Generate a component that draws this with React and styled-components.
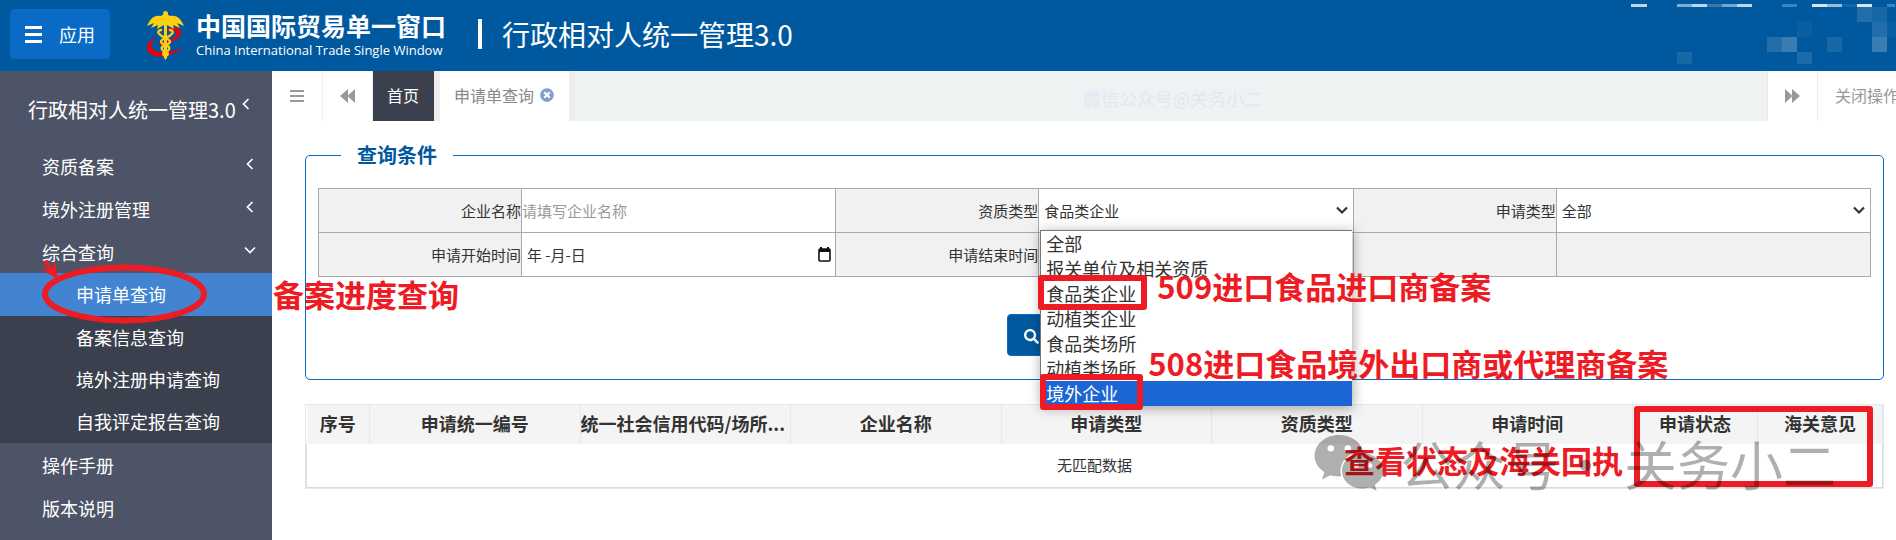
import styled, { createGlobalStyle } from "styled-components"
import { FaSearch, FaTimesCircle, FaWeixin } from "react-icons/fa"

const GlobalStyle = createGlobalStyle`
    * {
        box-sizing: border-box;
    }
    body {
        margin: 0;
        background: #fff;
        color: #333;
        font-family: "Noto Sans CJK SC", sans-serif;
        font-size: 15px;
        overflow-x: hidden;
    }
    button, input, select {
        font-family: inherit;
    }
    ul {
        margin: 0;
        padding: 0;
        list-style: none;
    }
    a {
        color: inherit;
        text-decoration: none;
    }
`

const Page = styled.div`
    min-height: 100vh;
    display: flex;
    flex-direction: column;
`

const Header = styled.header`
    position: relative;
    display: flex;
    align-items: center;
    height: 71px;
    padding: 0 10px;
    background: #00599f;
    color: #fff;
`

const AppButton = styled.button`
    display: flex;
    align-items: center;
    gap: 17px;
    height: 50px;
    margin-bottom: 3px;
    padding: 0 15px;
    border: 0;
    border-radius: 4px;
    background: #0a6bc6;
    color: #fff;
    font-size: 18px;
`

const Brand = styled.a`
    display: flex;
    align-items: center;
    gap: 12px;
    margin-left: 37px;
    white-space: nowrap;

    .brand__name {
        font-size: 25px;
        line-height: 28px;
        font-weight: 700;
    }

    .brand__english {
        font-family: "Open Sans", sans-serif;
        font-size: 13px;
        line-height: 22px;
    }
`

const SystemTitle = styled.h1`
    display: flex;
    align-items: center;
    gap: 20px;
    margin: 0 0 4px 32px;
    font-size: 28px;
    line-height: 40px;
    font-weight: 400;
    white-space: nowrap;

    &::before {
        content: "";
        width: 4px;
        height: 30px;
        background: #fff;
    }
`

const HeaderPixels = styled.svg`
    position: absolute;
    top: 0;
    right: 0;
`

const Body = styled.div`
    display: flex;
    flex: 1;
`

const Sidebar = styled.nav`
    flex: 0 0 272px;
    background: #4e5467;
    color: #fff;
`

const SidebarTitle = styled.a`
    display: flex;
    align-items: center;
    gap: 4px;
    height: 73px;
    padding: 3px 0 0 28px;
    font-size: 20px;
    white-space: nowrap;

    svg {
        margin-bottom: 10px;
    }
`

const NavLink = styled.a`
    display: flex;
    align-items: center;
    justify-content: space-between;
    height: 43px;
    padding: 0 16px 0 42px;
    font-size: 18px;

    svg {
        margin-bottom: 4px;
    }
`

const SubMenu = styled.ul`
    padding-bottom: 1px;
    background: #3a404d;
`

const SubItem = styled.li`
    position: relative;
    height: ${({ $active }) => ($active ? 43 : 42)}px;
    background: ${({ $active }) => ($active ? "#4284d0" : "none")};

    a {
        display: block;
        padding-left: 76px;
        font-size: 18px;
        line-height: 42px;
    }
`

const Main = styled.main`
    flex: 1;
    min-width: 0;
`

const TabBar = styled.div`
    display: flex;
    height: 50px;
    background: #eef2f3;
    color: #999;
`

const BarButton = styled.button`
    display: flex;
    align-items: center;
    justify-content: center;
    flex: 0 0 ${({ $width }) => $width || 50}px;
    padding: 0;
    border: 0;
    border-right: 1px solid #eee;
    background: #fff;
    color: #999;
    font-size: 16px;
    white-space: nowrap;
    overflow: hidden;
`

const CloseMenu = styled(BarButton)`
    justify-content: flex-start;
    padding: 0 0 2px 17px;
    border-right: 0;
`

const Tab = styled.a`
    display: flex;
    align-items: center;
    gap: 6px;
    padding: 0 15px 2px 14px;
    border-right: 6px solid #eee;
    background: ${({ $dark }) => ($dark ? "#3a404d" : "#fff")};
    color: ${({ $dark }) => ($dark ? "#fff" : "#888")};
    font-size: 16px;
    white-space: nowrap;

    svg {
        color: #7f9fd0;
        font-size: 14px;
    }
`

const TabSpace = styled.div`
    flex: 1;
    padding-left: 508px;
    border-right: 1px solid #e8e8e8;
    color: #e2e6f4;
    font-size: 18px;
    line-height: 54px;
    white-space: nowrap;
    overflow: hidden;
`

const Content = styled.div`
    padding: 20px 12px 52px 33px;
`

const QueryBox = styled.fieldset`
    min-width: 0;
    margin: 0;
    padding: 19px 12px 23px;
    border: 1px solid #0a6bc0;
    border-radius: 5px;

    legend {
        margin-left: 23px;
        padding: 0 16px;
        color: #00599f;
        font-size: 20px;
        line-height: 28px;
        font-weight: 700;
    }
`

const QueryTable = styled.table`
    width: 100%;
    border-collapse: collapse;
    table-layout: fixed;

    th,
    td {
        height: 44px;
        padding: 0;
        border: 1px solid #aaa;
    }

    th {
        width: 203px;
        background: #f1f1f1;
        font-weight: 400;
        text-align: right;
    }
`

const BlankCell = styled.td`
    background: #f1f1f1;
`

const Field = styled.div`
    position: relative;
    display: flex;
    align-items: center;
    height: 43px;
    padding-right: ${({ $icon }) => ($icon ? 4 : 0)}px;

    input,
    select {
        flex: 1;
        min-width: 0;
        height: 43px;
        border: 0;
        background: #fff;
        color: #333;
        font-size: 15px;
        outline: 0;
    }

    input {
        padding: 0 0 0 ${({ $icon }) => ($icon ? 5 : 0)}px;
    }

    input::placeholder {
        color: #999;
    }

    select {
        appearance: none;
        padding: 0 5px;
        border-radius: 0;
    }

    select + svg {
        position: absolute;
        top: 15px;
        right: 5px;
        pointer-events: none;
        stroke-width: 2.2;
    }
`

const Menu = styled.ul`
    position: absolute;
    z-index: 2;
    top: 41px;
    left: 1px;
    right: 1px;
    border: solid #767676;
    border-width: 1px 0 0 1px;
    background: #fff;
    box-shadow: 1px 2px 12px rgba(0, 0, 0, 0.35);
`

const MenuItem = styled.li`
    padding-left: 5px;
    background: ${({ $selected }) => ($selected ? "#1b66d4" : "#fff")};
    color: ${({ $selected }) => ($selected ? "#fff" : "#333")};
    font-size: 18px;
    line-height: 25px;
`

const Actions = styled.div`
    display: flex;
    justify-content: center;
    margin-top: 37px;
`

const SearchButton = styled.button`
    width: 176px;
    height: 42px;
    padding: 5px 16px 0;
    border: 1px solid #0a6bc0;
    border-radius: 4px;
    background: #00599f;
    color: #fff;
    font-size: 15px;
    text-align: left;
`

const Results = styled.div`
    position: relative;
    margin-top: 24px;
    border: 1px solid #e3e8ea;
`

const ResultTable = styled.table`
    width: 100%;
    border-collapse: collapse;
    table-layout: fixed;

    th {
        height: 39px;
        padding: 0 0 3px;
        border-right: 1px solid #e3e8ea;
        background: #f4f4f4;
        font-size: 18px;
        line-height: 24px;
        white-space: nowrap;
        overflow: hidden;
    }

    th:first-child {
        width: 63px;
    }

    th:nth-child(3) {
        text-align: left;
    }

    th:nth-child(n + 8) {
        width: 125px;
    }

    td {
        height: 43px;
        padding: 0 0 2px;
        border: 1px solid #e2d8da;
        border-top: 0;
        text-align: center;
    }
`

const Note = styled.span`
    position: absolute;
    z-index: 3;
    color: #ed1c24;
    font-size: 31px;
    line-height: 40px;
    font-weight: 700;
    white-space: nowrap;
`

const ProgressNote = styled(Note)`
    top: 1px;
    left: 273px;
`

const ImporterNote = styled(Note)`
    top: 77px;
    left: 118px;
`

const ExporterNote = styled(Note)`
    top: 154px;
    left: 109px;
`

const StatusNote = styled(Note)`
    top: 35px;
    right: 260px;
`

const Frame = styled.span`
    position: absolute;
    z-index: 3;
    border: 6px solid #ed1c24;
    border-radius: 3px;
`

const ImporterFrame = styled(Frame)`
    top: 86px;
    left: -1px;
    width: 109px;
    height: 35px;
`

const ExporterFrame = styled(Frame)`
    top: 185px;
    left: 1px;
    width: 103px;
    height: 36px;
`

const StatusFrame = styled(Frame)`
    top: 1px;
    right: 10px;
    width: 239px;
    height: 81px;
`

const Circle = styled.svg`
    position: absolute;
    z-index: 3;
    top: -15px;
    left: 38px;
`

const Watermark = styled.div`
    position: absolute;
    z-index: 4;
    top: 26px;
    right: 47px;
    display: flex;
    align-items: center;
    gap: 15px;
    color: #000;
    font-size: 53px;
    line-height: 62px;
    white-space: nowrap;
    opacity: 0.31;

    svg {
        font-size: 72px;
        height: 64px;
    }
`

const Bars = ({ width, height, thick }) => (
    <svg width={width} height={height} fill="currentColor">
        <rect width={width} height={thick} />
        <rect y={(height - thick) / 2} width={width} height={thick} />
        <rect y={height - thick} width={width} height={thick} />
    </svg>
)

const Chevron = ({ down }) => (
    <svg
        width="12"
        height="12"
        viewBox="0 0 12 12"
        fill="none"
        stroke="currentColor"
        strokeWidth="1.7"
    >
        <path d={down ? "M1 3.5L6 8.5L11 3.5" : "M8.5 1L3.5 6L8.5 11"} />
    </svg>
)

const Forward = () => (
    <svg width="15" height="14" fill="currentColor">
        <path d="M0 0L7 6.5V0L15 7L7 14V7.5L0 14Z" />
    </svg>
)

const Backward = () => (
    <svg width="15" height="14" fill="currentColor">
        <path d="M15 0L8 6.5V0L0 7L8 14V7.5L15 14Z" />
    </svg>
)

const Calendar = () => (
    <svg width="13" height="15" viewBox="0 0 13 15">
        <path d="M3 0V3M10 0V3" stroke="#111" strokeWidth="2" />
        <rect x="1" y="2" width="11" height="12" rx="1" fill="none" stroke="#111" strokeWidth="1.6" />
        <path d="M1 2H12V5H1Z" fill="#111" />
    </svg>
)

const Emblem = () => (
    <svg width="37" height="49" viewBox="0 0 37 49">
        <path
            d="M13 22C20 16 32 14 34 20C36 27 24 32 13 34L11 32C22 30 31 26 29 22C28 18 19 19 13 22Z"
            fill="#e60012"
        />
        <path
            d="M11 25C5 28 3 33 6 38C10 43 23 42 35 37C27 45 8 49 2 42C-3 36 2 28 11 25Z"
            fill="#e60012"
        />
        <path
            d="M18.5 3C21 3 22 5 24 5C30 4 34 8 37 15L30 12L33 17L26 14L27 18L20 14V47L18.5 49L17 47V14L10 18L11 14L4 17L7 12L0 15C3 8 7 4 13 5C15 5 16 3 18.5 3Z"
            fill="#fccf13"
        />
        <circle cx="18.5" cy="2.5" r="2.5" fill="#fccf13" />
        <path
            d="M14 19C8 20 13 25 18.5 27C25 30 24 32 18.5 34C13 36 14 39 18.5 41C22 42 21 44 19 45M23 19C29 20 24 25 18.5 27C12 30 13 32 18.5 34C24 36 23 39 18.5 41C15 42 16 44 18 45"
            fill="none"
            stroke="#fccf13"
            strokeWidth="2.4"
            strokeLinecap="round"
        />
    </svg>
)

// x, y, width, height, opacity
const pixels = [
    [0, 4, 16, 3, 0.75],
    [46, 4, 15, 3, 0.5],
    [61, 4, 15, 3, 0.75],
    [76, 4, 15, 3, 0.2],
    [91, 4, 15, 3, 0.45],
    [106, 4, 15, 3, 0.75],
    [151, 4, 15, 3, 0.25],
    [181, 4, 15, 3, 0.85],
    [196, 4, 15, 3, 0.6],
    [211, 4, 15, 3, 0.08],
    [226, 4, 15, 3, 0.85],
    [256, 4, 8, 3, 0.25],
    [226, 7, 15, 15, 0.13],
    [241, 7, 15, 15, 0.09],
    [166, 22, 15, 15, 0.04],
    [241, 22, 15, 15, 0.13],
    [256, 22, 9, 15, 0.03],
    [136, 37, 15, 15, 0.13],
    [151, 37, 15, 15, 0.22],
    [196, 37, 15, 15, 0.09],
    [241, 37, 15, 15, 0.22],
    [46, 52, 15, 12, 0.09],
    [166, 52, 15, 12, 0.11],
]

const types = [
    "全部",
    "报关单位及相关资质",
    "食品类企业",
    "动植类企业",
    "食品类场所",
    "动植类场所",
    "境外企业",
]

const columns = [
    "序号",
    "申请统一编号",
    "统一社会信用代码/场所...",
    "企业名称",
    "申请类型",
    "资质类型",
    "申请时间",
    "申请状态",
    "海关意见",
]

const App = () => {
    return (
        <Page>
            <GlobalStyle />
            <Header>
                <HeaderPixels width="265" height="71">
                    {pixels.map(([x, y, width, height, opacity]) => (
                        <rect
                            key={`${x}-${y}`}
                            x={x}
                            y={y}
                            width={width}
                            height={height}
                            fill="#fff"
                            opacity={opacity}
                        />
                    ))}
                </HeaderPixels>
                <AppButton type="button">
                    <Bars width={17} height={17} thick={3} />
                    应用
                </AppButton>
                <Brand href="#">
                    <Emblem />
                    <div>
                        <div className="brand__name">中国国际贸易单一窗口</div>
                        <div className="brand__english">
                            China International Trade Single Window
                        </div>
                    </div>
                </Brand>
                <SystemTitle>行政相对人统一管理3.0</SystemTitle>
            </Header>
            <Body>
                <Sidebar>
                    <SidebarTitle href="#">
                        行政相对人统一管理3.0
                        <Chevron />
                    </SidebarTitle>
                    <ul>
                        <li>
                            <NavLink href="#">
                                资质备案
                                <Chevron />
                            </NavLink>
                        </li>
                        <li>
                            <NavLink href="#">
                                境外注册管理
                                <Chevron />
                            </NavLink>
                        </li>
                        <li>
                            <NavLink href="#">
                                综合查询
                                <Chevron down />
                            </NavLink>
                            <SubMenu>
                                <SubItem $active>
                                    <a href="#">申请单查询</a>
                                    <Circle width="176" height="72" viewBox="0 0 176 72">
                                        <ellipse
                                            cx="86.5"
                                            cy="36"
                                            rx="79.5"
                                            ry="26.5"
                                            fill="none"
                                            stroke="#ed1c24"
                                            strokeWidth="6"
                                        />
                                        <path
                                            d="M5 4L9 2L14 10L17 3L20 21L2 11L10 12Z"
                                            fill="#ed1c24"
                                        />
                                    </Circle>
                                    <ProgressNote>备案进度查询</ProgressNote>
                                </SubItem>
                                <SubItem>
                                    <a href="#">备案信息查询</a>
                                </SubItem>
                                <SubItem>
                                    <a href="#">境外注册申请查询</a>
                                </SubItem>
                                <SubItem>
                                    <a href="#">自我评定报告查询</a>
                                </SubItem>
                            </SubMenu>
                        </li>
                        <li>
                            <NavLink href="#">操作手册</NavLink>
                        </li>
                        <li>
                            <NavLink href="#">版本说明</NavLink>
                        </li>
                    </ul>
                </Sidebar>
                <Main>
                    <TabBar>
                        <BarButton type="button" $width={51} aria-label="菜单">
                            <Bars width={14} height={12} thick={2} />
                        </BarButton>
                        <BarButton type="button" aria-label="向左">
                            <Backward />
                        </BarButton>
                        <Tab href="#" $dark>
                            首页
                        </Tab>
                        <Tab href="#">
                            申请单查询
                            <FaTimesCircle />
                        </Tab>
                        <TabSpace>微信公众号@关务小二</TabSpace>
                        <BarButton type="button" aria-label="向右">
                            <Forward />
                        </BarButton>
                        <CloseMenu type="button" $width={78}>
                            关闭操作
                        </CloseMenu>
                    </TabBar>
                    <Content>
                        <QueryBox>
                            <legend>查询条件</legend>
                            <QueryTable>
                                <tbody>
                                    <tr>
                                        <th>
                                            <label htmlFor="company">企业名称</label>
                                        </th>
                                        <td>
                                            <Field>
                                                <input id="company" placeholder="请填写企业名称" />
                                            </Field>
                                        </td>
                                        <th>
                                            <label htmlFor="quality">资质类型</label>
                                        </th>
                                        <td>
                                            <Field>
                                                <select id="quality" defaultValue="食品类企业">
                                                    {types.map((type) => (
                                                        <option key={type}>{type}</option>
                                                    ))}
                                                </select>
                                                <Chevron down />
                                                <Menu>
                                                    {types.map((type) => (
                                                        <MenuItem
                                                            key={type}
                                                            $selected={type === "境外企业"}
                                                        >
                                                            {type}
                                                        </MenuItem>
                                                    ))}
                                                </Menu>
                                                <ImporterFrame />
                                                <ImporterNote>509进口食品进口商备案</ImporterNote>
                                                <ExporterFrame />
                                                <ExporterNote>
                                                    508进口食品境外出口商或代理商备案
                                                </ExporterNote>
                                            </Field>
                                        </td>
                                        <th>
                                            <label htmlFor="apply">申请类型</label>
                                        </th>
                                        <td>
                                            <Field>
                                                <select id="apply">
                                                    <option>全部</option>
                                                </select>
                                                <Chevron down />
                                            </Field>
                                        </td>
                                    </tr>
                                    <tr>
                                        <th>
                                            <label htmlFor="start">申请开始时间</label>
                                        </th>
                                        <td>
                                            <Field $icon>
                                                <input id="start" defaultValue="年 -月-日" />
                                                <Calendar />
                                            </Field>
                                        </td>
                                        <th>
                                            <label htmlFor="end">申请结束时间</label>
                                        </th>
                                        <td>
                                            <Field $icon>
                                                <input id="end" />
                                            </Field>
                                        </td>
                                        <BlankCell />
                                        <BlankCell />
                                    </tr>
                                </tbody>
                            </QueryTable>
                            <Actions>
                                <SearchButton type="button" aria-label="查询">
                                    <FaSearch />
                                </SearchButton>
                            </Actions>
                        </QueryBox>
                        <Results>
                            <ResultTable>
                                <thead>
                                    <tr>
                                        {columns.map((column) => (
                                            <th key={column}>{column}</th>
                                        ))}
                                    </tr>
                                </thead>
                                <tbody>
                                    <tr>
                                        <td colSpan={columns.length}>无匹配数据</td>
                                    </tr>
                                </tbody>
                            </ResultTable>
                            <StatusFrame />
                            <StatusNote>查看状态及海关回执</StatusNote>
                            <Watermark>
                                <FaWeixin />
                                <span>公众号· 关务小二</span>
                            </Watermark>
                        </Results>
                    </Content>
                </Main>
            </Body>
        </Page>
    )
}

export default App
